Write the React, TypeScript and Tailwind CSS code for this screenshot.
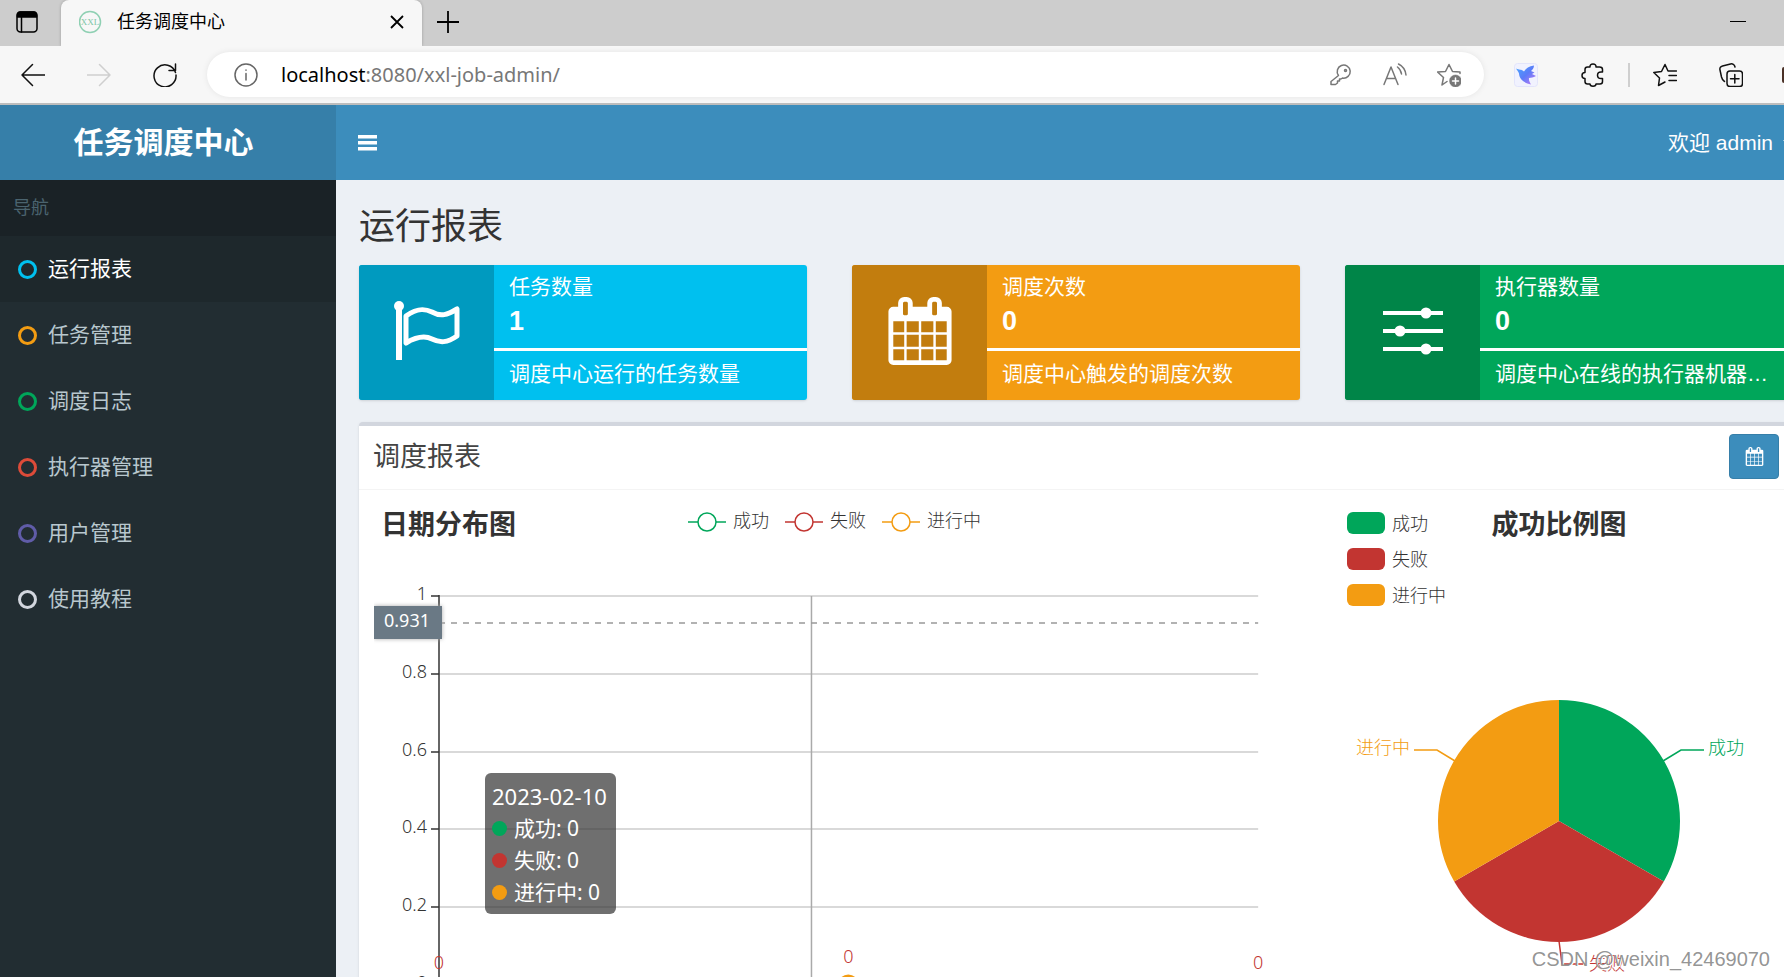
import type { ReactNode } from "react";

const cnFont = "font-['Liberation_Sans','Noto_Sans_CJK_SC',sans-serif]";
const chartFont = "font-['Noto_Sans','Noto_Sans_CJK_SC',sans-serif]";

const menus = [
  { id: 1, title: "运行报表", color: "border-[#00c0ef]", active: true },
  { id: 2, title: "任务管理", color: "border-[#f39c12]", active: false },
  { id: 3, title: "调度日志", color: "border-[#00a65a]", active: false },
  { id: 4, title: "执行器管理", color: "border-[#dd4b39]", active: false },
  { id: 5, title: "用户管理", color: "border-[#605ca8]", active: false },
  { id: 6, title: "使用教程", color: "border-[#d2d6de]", active: false },
];

const series = [
  { name: "成功", stroke: "#00a65a", bg: "bg-[#00a65a]" },
  { name: "失败", stroke: "#c23531", bg: "bg-[#c23531]" },
  { name: "进行中", stroke: "#f39c12", bg: "bg-[#f39c12]" },
];

const CalendarIcon = ({ className }: { className: string }) => (
  <svg viewBox="0 0 1792 1792" fill="currentColor" className={className}>
    <path d="M192 1664h288v-288h-288v288zm352 0h320v-288h-320v288zm-352-352h288v-320h-288v320zm352 0h320v-320h-320v320zm-352-384h288v-288h-288v288zm736 736h320v-288h-320v288zm-384-736h320v-288h-320v288zm768 736h288v-288h-288v288zm-384-352h320v-320h-320v320zm-352-864v-288q0-13-9.500-22.500t-22.500-9.500h-64q-13 0-22.500 9.500t-9.500 22.500v288q0 13 9.500 22.500t22.500 9.500h64q13 0 22.500-9.500t9.500-22.500zm736 864h288v-320h-288v320zm-384-384h320v-288h-320v288zm384 0h288v-288h-288v288zm32-480v-288q0-13-9.500-22.500t-22.500-9.500h-64q-13 0-22.500 9.500t-9.500 22.500v288q0 13 9.500 22.500t22.500 9.500h64q13 0 22.500-9.500t9.500-22.500zm384-64v1280q0 52-38 90t-90 38h-1408q-52 0-90-38t-38-90v-1280q0-52 38-90t90-38h128v-96q0-66 47-113t113-47h64q66 0 113 47t47 113v96h384v-96q0-66 47-113t113-47h64q66 0 113 47t47 113v96h128q52 0 90 38t38 90z" />
  </svg>
);

const FlagIcon = () => (
  <svg viewBox="0 0 72 72" fill="none" stroke="white" className="h-[72px] w-[72px]">
    <circle cx="8" cy="11" r="5" fill="white" stroke="none" />
    <path d="M8 11V65" strokeWidth="6" />
    <path
      d="M15 21C27 12 35 14 41 17C50 22 56 20 66 14V41C56 48 49 48 41 44C33 40 25 42 15 48Z"
      strokeWidth="5"
      strokeLinejoin="round"
    />
  </svg>
);

const SlidersIcon = () => (
  <svg viewBox="0 0 60 60" stroke="white" fill="white" className="h-[60px] w-[60px]">
    <path d="M0 12H60M0 30H60M0 48H60" strokeWidth="4" />
    <g stroke="none">
      <circle cx="43" cy="12" r="5.500" />
      <circle cx="17" cy="30" r="5.500" />
      <circle cx="43" cy="48" r="5.500" />
    </g>
  </svg>
);

const cards = [
  {
    id: 1,
    title: "任务数量",
    value: "1",
    description: "调度中心运行的任务数量",
    bg: "bg-[#00c0ef]",
    iconBg: "bg-[#009abf]",
    icon: <FlagIcon />,
  },
  {
    id: 2,
    title: "调度次数",
    value: "0",
    description: "调度中心触发的调度次数",
    bg: "bg-[#f39c12]",
    iconBg: "bg-[#c27d0e]",
    icon: <CalendarIcon className="h-[68px] w-[68px]" />,
  },
  {
    id: 3,
    title: "执行器数量",
    value: "0",
    description: "调度中心在线的执行器机器数量",
    bg: "bg-[#00a65a]",
    iconBg: "bg-[#008548]",
    icon: <SlidersIcon />,
  },
];

// 24px line icon used by the browser toolbar
const Line = ({ children, className = "" }: { children: ReactNode; className?: string }) => (
  <svg
    viewBox="0 0 24 24"
    fill="none"
    stroke="currentColor"
    strokeWidth="1.500"
    strokeLinecap="round"
    strokeLinejoin="round"
    className={`h-6 w-6 shrink-0 ${className}`}
  >
    {children}
  </svg>
);

const TabBar = () => (
  <div className="flex h-[46px] items-stretch bg-[#cdcdcd] pb-[2px] text-black">
    <button aria-label="标签页操作" className="flex w-[61px] items-center pl-[15px]">
      <Line>
        <rect x="2" y="2" width="20" height="20" rx="3.500" />
        <path d="M2.500 3.500C3 2.500 4 2 5 2H19C20 2 21 2.500 21.500 3.500V7H2.500Z" fill="currentColor" />
        <path d="M6.500 7V22" />
      </Line>
    </button>
    <div className="-mb-[2px] flex w-[361px] items-center rounded-t-lg bg-[#f7f7f7] px-[18px] pb-[2px] shadow-[0_0_3px_rgba(0,0,0,0.25)]">
      <svg viewBox="0 0 24 24" className="h-6 w-6 shrink-0">
        <circle cx="11" cy="12" r="10.500" fill="none" stroke="#8fd0b3" strokeWidth="1.500" />
        <text x="11" y="15" fontSize="9" textAnchor="middle" fill="#7cc5a5" fontFamily="Liberation Serif">
          XXL
        </text>
      </svg>
      <span className="ml-[14px] flex-1 text-lg leading-6">任务调度中心</span>
      <button aria-label="关闭标签页">
        <svg viewBox="0 0 14 14" stroke="currentColor" strokeWidth="1.800" className="h-[14px] w-[14px]">
          <path d="M1 1L13 13M13 1L1 13" />
        </svg>
      </button>
    </div>
    <button aria-label="新建标签页" className="pl-[15px]">
      <svg viewBox="0 0 22 22" stroke="currentColor" strokeWidth="1.800" className="h-[22px] w-[22px]">
        <path d="M11 0V22M0 11H22" />
      </svg>
    </button>
    <div className="flex-1" />
    <button aria-label="最小化" className="pr-[38px]">
      <svg viewBox="0 0 16 2" className="h-[2px] w-4">
        <path d="M0 0H16V1H0Z" />
      </svg>
    </button>
  </div>
);

const Toolbar = () => (
  <div className="flex h-[59px] items-center border-b-2 border-[#bdbdbd] bg-[#f7f7f7] pl-[21px] text-[#111]">
    <div className="flex items-center gap-[42px]">
      <button aria-label="后退">
        <Line>
          <path d="M11.500 1.500L1 12L11.500 22.500M1 12H24" />
        </Line>
      </button>
      <button aria-label="前进" className="text-[#cfcfcf]">
        <Line>
          <path d="M12.500 1.500L23 12L12.500 22.500M23 12H0" />
        </Line>
      </button>
      <button aria-label="刷新">
        <Line>
          <path d="M22.500 9.500A11 11 0 1 0 23 12M22.500 1V7.500H16" />
        </Line>
      </button>
    </div>
    <div className="ml-[30px] flex h-[45px] flex-1 items-center rounded-full bg-white pr-[23px] pl-[27px] text-[#777] shadow-[0_0_6px_rgba(0,0,0,0.08)]">
      <Line className="text-[#666]">
        <circle cx="12" cy="12" r="11" />
        <path d="M12 10.500V17M12 7V7.200" />
      </Line>
      <span className={`ml-[23px] flex-1 text-xl ${chartFont}`}>
        <span className="text-black">localhost</span>:8080/xxl-job-admin/
      </span>
      <div className="flex items-center gap-[30px]">
        <button aria-label="密码">
          <Line>
            <path d="M9.500 12.500A6.500 6.500 0 1 1 13.500 15L12 16H10.500V18H8.500V20L6.500 21.500H2V18.500Z" />
            <circle cx="16.500" cy="7.500" r="1" />
          </Line>
        </button>
        <button aria-label="朗读">
          <Line>
            <path d="M1 21.500L8 4L15 21.500M3.500 15.500H12.500M14.500 4C16.500 5.500 18 8 18.500 11M15.500 1C19.500 3 22.500 7 23 12" />
          </Line>
        </button>
        <button aria-label="收藏">
          <Line>
            <path d="M10 18.500L5 22L6.500 14.500L0.500 9L8.500 8.500L12 1.500L15.500 8.500L23 9V10.500" />
            <circle cx="18.500" cy="18" r="6.500" fill="currentColor" stroke="white" strokeWidth="0.500" />
            <path d="M18.500 15V21M15.500 18H21.500" stroke="white" />
          </Line>
        </button>
      </div>
    </div>
    <div className="ml-[30px] flex items-center">
      <button aria-label="扩展">
        <svg viewBox="0 0 24 24" className="h-6 w-6">
          <defs>
            <linearGradient id="bird" x1="0" y1="0" x2="1" y2="1">
              <stop offset="0" stopColor="#4aa8ff" />
              <stop offset="0.500" stopColor="#5b7cf8" />
              <stop offset="1" stopColor="#c77bf5" />
            </linearGradient>
          </defs>
          <rect x="0.500" y="0.500" width="23" height="23" rx="3" fill="#f1f2fe" stroke="#e3e5fb" />
          <path
            d="M2 5.500C5 7 7.500 6 10 8.500C12 5 15 3.500 20 2.500C20 5 18.500 7 17 8L20.500 9.500L18 11L22 13C19 14.500 17.500 14.500 15 15C14.500 17.500 16 19.500 17 21.500C11 20 5.500 17 5 10.500C4.500 8.500 3 7.500 2 5.500Z"
            fill="url(#bird)"
          />
        </svg>
      </button>
      <button aria-label="插件" className="ml-[43px]">
        <Line>
          <path d="M6.500 4H9C8.800 2 10 1 12 1S15.200 2 15 4H18.500C20 4 21.500 4.800 21.500 6.500V9H20C18 9 16.500 10.300 16.500 12.200S18 15.500 20 15.500H21.500V18.500C21.500 20 20.500 21 19 21H15C15 22.500 13.500 23.200 12 23.200S9 22.500 9 21H6.500C5 21 4 20 4 18.500V15.500C2 15.500 1 14 1 12.500S2 9.500 4 9.500V6.500C4 5 5 4 6.500 4Z" />
        </Line>
      </button>
      <span className="ml-[23px] h-6 w-[2px] bg-[#cfcfcf]" />
      <button aria-label="收藏夹" className="ml-[23px]">
        <Line>
          <path d="M12 19L5.500 22.500L6.500 15L0.800 9.500L8.500 8.500L12 1.500L15 8H23.500M16 12.500H23.500M16 17.500H23.500" />
        </Line>
      </button>
      <button aria-label="集锦" className="ml-[42px]">
        <Line>
          <rect x="8" y="8" width="15.500" height="15.500" rx="3" />
          <path d="M15.800 11.500V20M11.500 15.800H20M5.500 18.500C3.500 17.500 3 16 2.500 14L1 7C0.500 5 1.500 3.500 3.500 3L11.500 1C13.500 0.500 15.500 1.500 16 4" />
        </Line>
      </button>
      <span className="ml-[39px] h-4 w-[2px] rounded-l-full bg-[#4b3127]" />
    </div>
  </div>
);

const Sidebar = () => (
  <aside className="flex w-[336px] shrink-0 flex-col bg-[#222d32]">
    <a href="#" className="flex h-[75px] items-center justify-center bg-[#367fa9] pr-[9px] text-[30px] font-bold text-white">
      任务调度中心
    </a>
    <div className="h-14 bg-[#1a2226] pl-[13px] text-lg leading-[56px] text-[#4b646f]">导航</div>
    <nav>
      {menus.map((menu) => (
        <a
          href="#"
          key={menu.id}
          className={`flex h-[66px] items-center pl-[18px] text-[21px] ${
            menu.active ? "bg-[#1e282c] text-white" : "text-[#b8c7ce]"
          }`}
        >
          <span className={`h-[19px] w-[19px] rounded-full border-3 ${menu.color}`} />
          <span className="ml-[11px]">{menu.title}</span>
        </a>
      ))}
    </nav>
  </aside>
);

const yTicks = [
  { label: "1", y: 26 },
  { label: "0.8", y: 104 },
  { label: "0.6", y: 182 },
  { label: "0.4", y: 259 },
  { label: "0.2", y: 337 },
  { label: "0", y: 415 },
];

const LineChart = () => (
  <div className={`col-span-2 ${chartFont}`}>
    <div className="grid h-20 grid-cols-[1fr_auto_1fr] items-start pt-3">
      <h3 className="pl-[7px] text-[27px] leading-[44px] font-bold text-[#333]">日期分布图</h3>
      <ul className="flex gap-4 text-lg leading-8 font-light text-[#333]">
        {series.map((item) => (
          <li key={item.name} className="flex h-9 items-center gap-[7px]">
            <svg width="38" height="20" fill="none" stroke={item.stroke} strokeWidth="1.500" className="mt-[3px]">
              <path d="M0 10H38" />
              <circle cx="19" cy="10" r="9" fill="white" />
            </svg>
            {item.name}
          </li>
        ))}
      </ul>
    </div>
    <div className="relative">
      <svg className="block h-[480px] w-full text-lg font-light">
        {yTicks.map((tick) => (
          <g key={tick.label}>
            <line x1="65" x2="96%" y1={tick.y} y2={tick.y} stroke="#ccc" strokeWidth="1.500" />
            <line x1="57" x2="65" y1={tick.y} y2={tick.y} stroke="#333" strokeWidth="1.500" />
            <text x="53" y={tick.y + 4} textAnchor="end" fill="#333">
              {tick.label}
            </text>
          </g>
        ))}
        <line x1="65" x2="65" y1="25" y2="415" stroke="#333" strokeWidth="1.500" />
        {/* axis pointer */}
        <line x1="47.5%" x2="47.5%" y1="26" y2="415" stroke="#aaa" strokeWidth="1.500" />
        <line x1="65" x2="96%" y1="53" y2="53" stroke="#999" strokeWidth="1.500" strokeDasharray="6 6" />
        <rect x="0" y="36" width="68" height="33" fill="#6a7985" className="drop-shadow-[0_0_2px_#aaa]" />
        <text x="56" y="57" textAnchor="end" fill="white" className="font-normal">
          0.931
        </text>
        <g fill="#c23531" textAnchor="middle">
          <text x="65" y="399">0</text>
          <text x="51.5%" y="393">0</text>
          <text x="96%" y="399">0</text>
        </g>
        <circle cx="51.5%" cy="415" r="9" fill="white" stroke="#f39c12" strokeWidth="3" />
      </svg>
      <div className="absolute top-[203px] left-[111px] rounded-md bg-[#323232]/70 px-[7px] pt-[8px] pb-[6px] text-[21px] leading-[31px] text-white">
        <div className="pr-[2px] text-[22px]">2023-02-10</div>
        {series.map((item) => (
          <div key={item.name} className="flex h-8 items-center">
            <span className={`mr-[7px] h-[15px] w-[15px] rounded-full ${item.bg}`} />
            {item.name}: 0
          </div>
        ))}
      </div>
    </div>
  </div>
);

const PieChart = () => (
  <div className={chartFont}>
    <div className="grid h-[130px] grid-cols-[1fr_auto_1fr] items-start pt-3">
      <ul className="flex flex-col gap-1 pt-[5px] pl-[7px] text-lg leading-8 font-light text-[#333]">
        {series.map((item) => (
          <li key={item.name} className="flex items-center gap-[7px]">
            <span className={`h-[22px] w-[38px] rounded-md ${item.bg}`} />
            {item.name}
          </li>
        ))}
      </ul>
      <h3 className="text-[27px] leading-[44px] font-bold text-[#333]">成功比例图</h3>
    </div>
    <svg viewBox="0 0 438 400" className="mx-auto block h-[400px] w-[438px] text-lg font-light">
      <path d="M219 201V80A121 121 0 0 1 323.800 261.500Z" fill="#00a65a" />
      <path d="M219 201L323.800 261.500A121 121 0 0 1 114.200 261.500Z" fill="#c23531" />
      <path d="M219 201L114.200 261.500A121 121 0 0 1 219 80Z" fill="#f39c12" />
      <g fill="none" strokeWidth="1.500">
        <path d="M323 141L341 130H364" stroke="#00a65a" />
        <path d="M115 141L97 130H74" stroke="#f39c12" />
        <path d="M219 321L222 344H243" stroke="#c23531" />
      </g>
      <text x="368" y="134" fill="#00a65a">成功</text>
      <text x="70" y="134" fill="#f39c12" textAnchor="end">进行中</text>
      <text x="249" y="350" fill="#c23531">失败</text>
    </svg>
  </div>
);

const App = () => {
  return (
    <div className={`relative flex h-screen flex-col overflow-hidden bg-[#ecf0f5] ${cnFont}`}>
      <TabBar />
      <Toolbar />
      <div className="flex min-h-0 flex-1">
        <Sidebar />
        <div className="min-w-0 flex-1 overflow-hidden">
          <header className="flex h-[75px] items-center justify-between bg-[#3c8dbc] pl-[22px] text-white">
            <button aria-label="切换菜单">
              <svg viewBox="0 0 19 16" className="h-4 w-[19px]" fill="currentColor">
                <path d="M0 0H19V3.500H0ZM0 6H19V9.500H0ZM0 12H19V15.500H0Z" />
              </svg>
            </button>
            <a href="#" className="flex items-center text-[21px]">
              欢迎 admin
              <svg viewBox="0 0 12 6" className="-mr-[11px] ml-[10px] h-[6px] w-3" fill="currentColor">
                <path d="M0 0H12L6 6Z" />
              </svg>
            </a>
          </header>

          {/* the content is a little wider than the window */}
          <main className="-mr-[9px] pl-[23px]">
            <h1 className="pt-[23px] text-4xl leading-[48px] text-[#333]">运行报表</h1>
            <div className="mt-[14px] grid grid-cols-3 gap-[45px]">
              {cards.map((card) => (
                <div key={card.id} className={`flex h-[135px] overflow-hidden rounded-[3px] text-white shadow-sm ${card.bg}`}>
                  <div className={`flex w-[135px] shrink-0 items-center justify-center pb-[3px] ${card.iconBg}`}>{card.icon}</div>
                  <div className="min-w-0 flex-1 pt-[7px] text-[21px] leading-[30px]">
                    <div className="px-[15px]">{card.title}</div>
                    <div className="px-[15px] text-[27px] leading-[38px] font-bold">{card.value}</div>
                    <div className="mt-2 h-[3px] bg-white" />
                    <div className="mt-2 truncate px-[15px]">{card.description}</div>
                  </div>
                </div>
              ))}
            </div>

            <section className="mt-[22px] rounded-[4px] border-t-4 border-[#d2d6de] bg-white shadow-sm">
              <div className="flex h-16 items-center justify-between border-b border-[#f4f4f4] pr-[14px] pb-[2px] pl-[14px]">
                <h2 className="text-[27px] leading-8 text-[#444]">调度报表</h2>
                <button
                  aria-label="选择日期"
                  className="flex h-[45px] w-[50px] items-center justify-center rounded-[4px] border border-[#367fa9] bg-[#3c8dbc] text-white"
                >
                  <CalendarIcon className="h-[19px] w-[19px]" />
                </button>
              </div>
              <div className="grid grid-cols-3 gap-[45px] px-[15px]">
                <LineChart />
                <PieChart />
              </div>
            </section>
          </main>
        </div>
      </div>
      <div className="absolute right-[14px] bottom-1 text-[20px] leading-7 text-[#888]/90 [text-shadow:1px_1px_0_#fff]">
        CSDN @weixin_42469070
      </div>
    </div>
  );
};

export default App;
